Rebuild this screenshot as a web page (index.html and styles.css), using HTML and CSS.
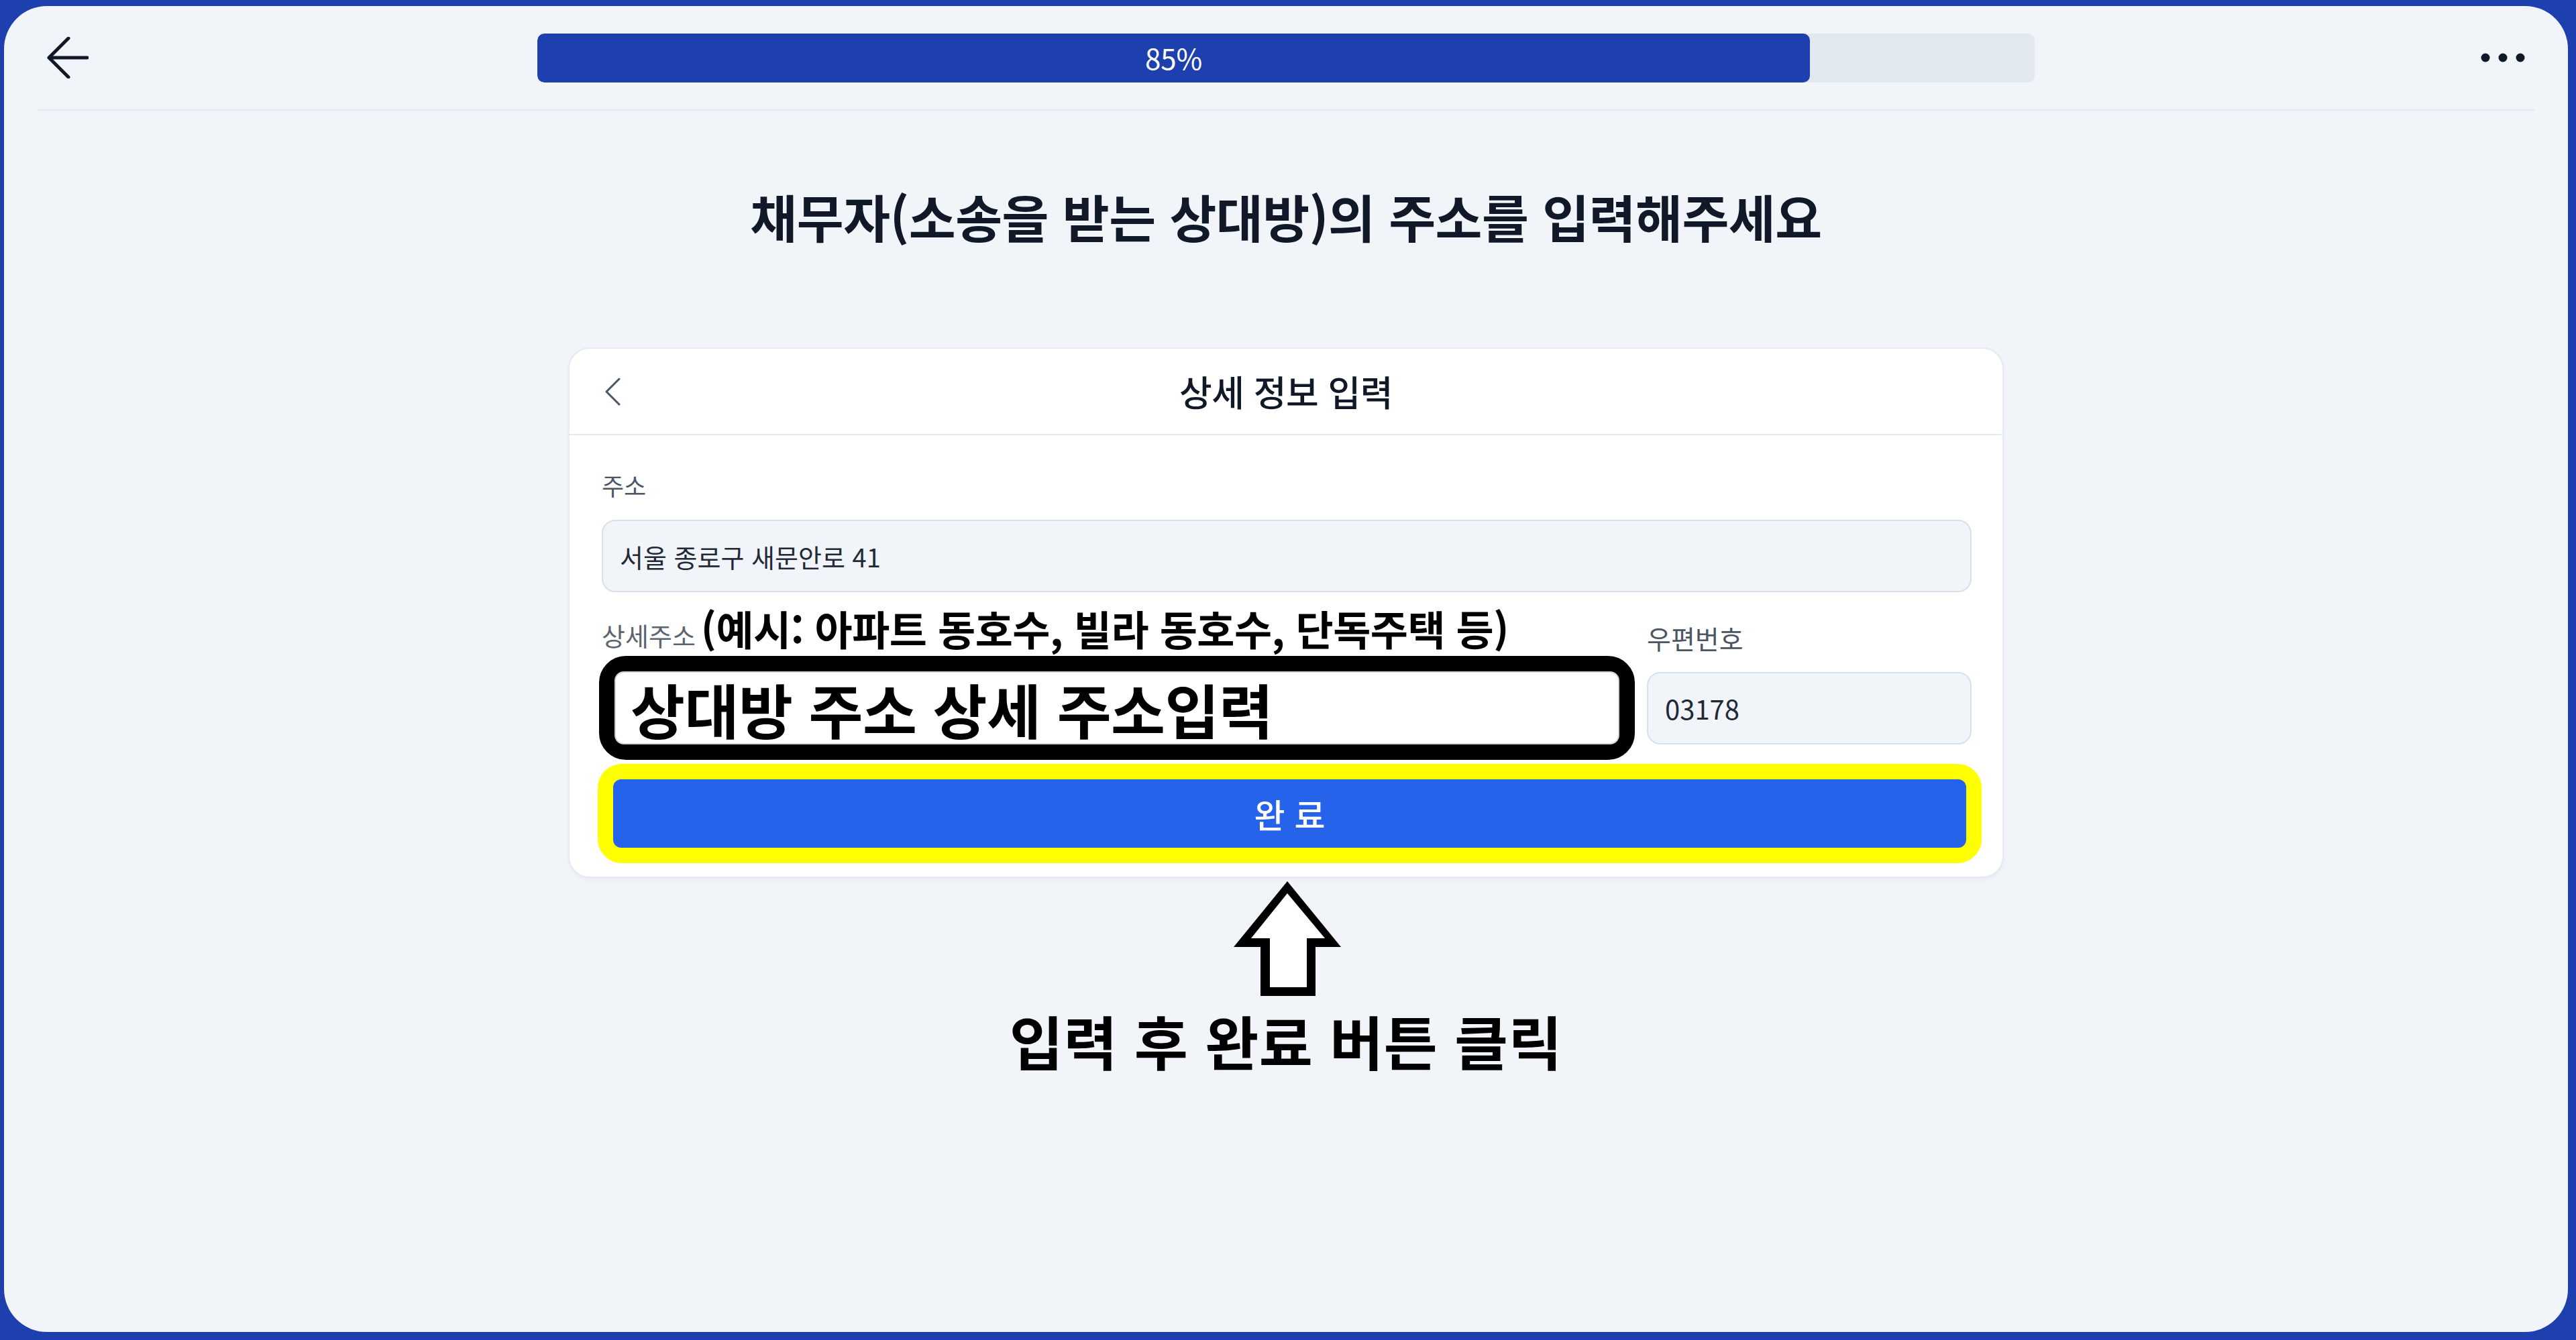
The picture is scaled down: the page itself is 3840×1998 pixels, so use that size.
FILE: index.html
```html
<!DOCTYPE html>
<html lang="ko">
<head>
<meta charset="utf-8">
<title>주소 입력</title>
<link rel="stylesheet" href="styles.css">
</head>
<body>
<div class="frame">
  <header class="topbar">
    <div class="top-left">
      <svg class="back-icon" width="62" height="62" viewBox="0 0 62 62" aria-hidden="true">
        <path d="M32 2 L3 31 L32 60 M3 31 H60" fill="none" stroke="#111827" stroke-width="5" stroke-linecap="round" stroke-linejoin="round"/>
      </svg>
    </div>
    <div class="progress">
      <div class="progress-fill" style="width:85%">85%</div>
    </div>
    <div class="top-right">
      <svg class="more-icon" width="66" height="14" viewBox="0 0 66 14" aria-hidden="true">
        <circle cx="7" cy="7" r="6.5" fill="#111827"/>
        <circle cx="33" cy="7" r="6.5" fill="#111827"/>
        <circle cx="59" cy="7" r="6.5" fill="#111827"/>
      </svg>
    </div>
  </header>

  <main class="content">
    <h1 class="page-title">채무자(소송을 받는 상대방)의 주소를 입력해주세요</h1>

    <section class="card">
      <div class="card-head">
        <svg class="chev" width="28" height="42" viewBox="0 0 28 42" aria-hidden="true">
          <path d="M24 2 L5 21 L24 40" fill="none" stroke="#4b5563" stroke-width="3" stroke-linecap="round" stroke-linejoin="round"/>
        </svg>
        <h2 class="card-title">상세 정보 입력</h2>
      </div>
      <div class="card-body">
        <div class="label">주소</div>
        <div class="field field-addr">서울 종로구 새문안로 41</div>

        <div class="addr-grid">
          <div class="label-line">
            <span class="label label-sm">상세주소</span>
            <span class="hint">(예시: 아파트 동호수, 빌라 동호수, 단독주택 등)</span>
          </div>
          <div class="label label-zip">우편번호</div>
          <div class="detail-box">
            <div class="detail-input">상대방 주소 상세 주소입력</div>
          </div>
          <div class="field field-zip">03178</div>
        </div>

        <div class="btn-frame">
          <button class="btn-done" type="button">완 료</button>
        </div>
      </div>
    </section>

    <svg class="up-arrow" width="160" height="171" viewBox="0 0 160 171" aria-hidden="true">
      <polygon points="80,0 160,98 122,98 122,171 40,171 40,98 0,98" fill="#000"/>
      <polygon points="80,18 136,85 109,85 109,158 54,158 54,85 26,85" fill="#fff"/>
    </svg>
    <p class="callout">입력 후 완료 버튼 클릭</p>
  </main>
</div>
</body>
</html>
```

FILE: styles.css
```css
* { box-sizing: border-box; }

html, body {
  margin: 0;
  padding: 0;
}

body {
  width: 3840px;
  height: 1998px;
  background: #1e3fae;
  font-family: "Noto Sans CJK KR", "Noto Sans", sans-serif;
  color: #111827;
  padding: 9px 12px 12px 6px;
  overflow: hidden;
}

.frame {
  width: 3822px;
  height: 1977px;
  background: #f1f4f9;
  border-radius: 64px;
  display: flex;
  flex-direction: column;
}

/* ---------- top bar ---------- */
.topbar {
  margin: 0 50px;
  height: 156px;
  border-bottom: 2px solid #e2e8f0;
  display: grid;
  grid-template-columns: 1fr 2232px 1fr;
  align-items: center;
  padding: 0 14px;
  flex-shrink: 0;
}

.top-left { display: flex; align-items: center; }
.top-right { display: flex; justify-content: flex-end; align-items: center; }
.back-icon, .more-icon { display: block; }

.progress {
  height: 73px;
  background: #e2e8f0;
  border-radius: 10px;
  overflow: hidden;
  display: flex;
}

.progress-fill {
  height: 100%;
  background: #1e40af;
  border-radius: 10px;
  color: #fff;
  font-size: 42px;
  display: flex;
  align-items: center;
  justify-content: center;
  line-height: 1;
}

/* ---------- content ---------- */
.content {
  display: flex;
  flex-direction: column;
  align-items: center;
}

.page-title {
  margin: 115px 0 0;
  font-size: 76px;
  font-weight: 700;
  line-height: 84px;
  letter-spacing: -0.5px;
  color: #111827;
}

.card {
  margin-top: 154px;
  width: 2140px;
  background: #fff;
  border: 2px solid #e5e9f0;
  border-radius: 32px;
  box-shadow: 0 3px 6px rgba(15, 23, 42, 0.04);
}

.card-head {
  height: 129px;
  border-bottom: 2px solid #e5e9f0;
  display: grid;
  grid-template-columns: 1fr auto 1fr;
  align-items: center;
  padding: 0 50px;
}

.chev { display: block; }

.card-title {
  margin: 0;
  font-size: 53px;
  font-weight: 500;
  letter-spacing: -0.5px;
  line-height: 1.2;
  color: #111827;
}

.card-body {
  padding: 53px 46px 20px 48px;
}

.label {
  font-size: 36px;
  line-height: 43px;
  color: #4b5563;
}

.field {
  height: 108px;
  background: #f1f4f9;
  border: 2px solid #d9e0ea;
  border-radius: 20px;
  display: flex;
  align-items: center;
  padding: 0 25px;
  color: #1f2937;
}

.field-addr {
  margin-top: 30px;
  font-size: 38px;
}

.addr-grid {
  margin-top: 25px;
  display: grid;
  grid-template-columns: 1fr 484px;
  column-gap: 18px;
  row-gap: 2px;
  align-items: end;
}

.label-line {
  height: 68px;
  display: flex;
  align-items: baseline;
  gap: 8px;
}

.label-sm {
  font-size: 38px;
  line-height: 68px;
  color: #5b6472;
}

.hint {
  font-size: 61px;
  font-weight: 700;
  color: #000;
  letter-spacing: -0.5px;
  line-height: 58px;
}

.label-zip {
  font-size: 39px;
  padding-bottom: 3px;
}

.detail-box {
  margin-left: -4px;
  height: 155px;
  border: 23px solid #000;
  border-radius: 40px;
  background: #000;
  align-self: center;
}

.detail-input {
  height: 100%;
  background: #fff;
  border: 2px solid #d1d5db;
  border-radius: 14px;
  display: flex;
  align-items: center;
  padding: 0 22px;
  font-size: 88px;
  line-height: 1;
  font-weight: 700;
  color: #000;
  letter-spacing: -0.5px;
}

.field-zip {
  align-self: center;
  font-size: 40px;
}

.btn-frame {
  margin: 6px -15px 0 -6px;
  border: 23px solid #ffff00;
  border-radius: 36px;
  background: #ffff00;
}

.btn-done {
  display: flex;
  width: 100%;
  height: 102px;
  align-items: center;
  justify-content: center;
  background: #2563eb;
  border: none;
  border-radius: 12px;
  color: #fff;
  font-family: "Noto Sans CJK KR", "Noto Sans", sans-serif;
  font-size: 50px;
  font-weight: 500;
  padding: 0;
}

.up-arrow {
  display: block;
  margin-top: 5px;
  margin-left: 4px;
}

.callout {
  margin: 21px 0 0;
  font-size: 87px;
  font-weight: 700;
  line-height: 90px;
  color: #000;
  letter-spacing: 0.5px;
}
```
